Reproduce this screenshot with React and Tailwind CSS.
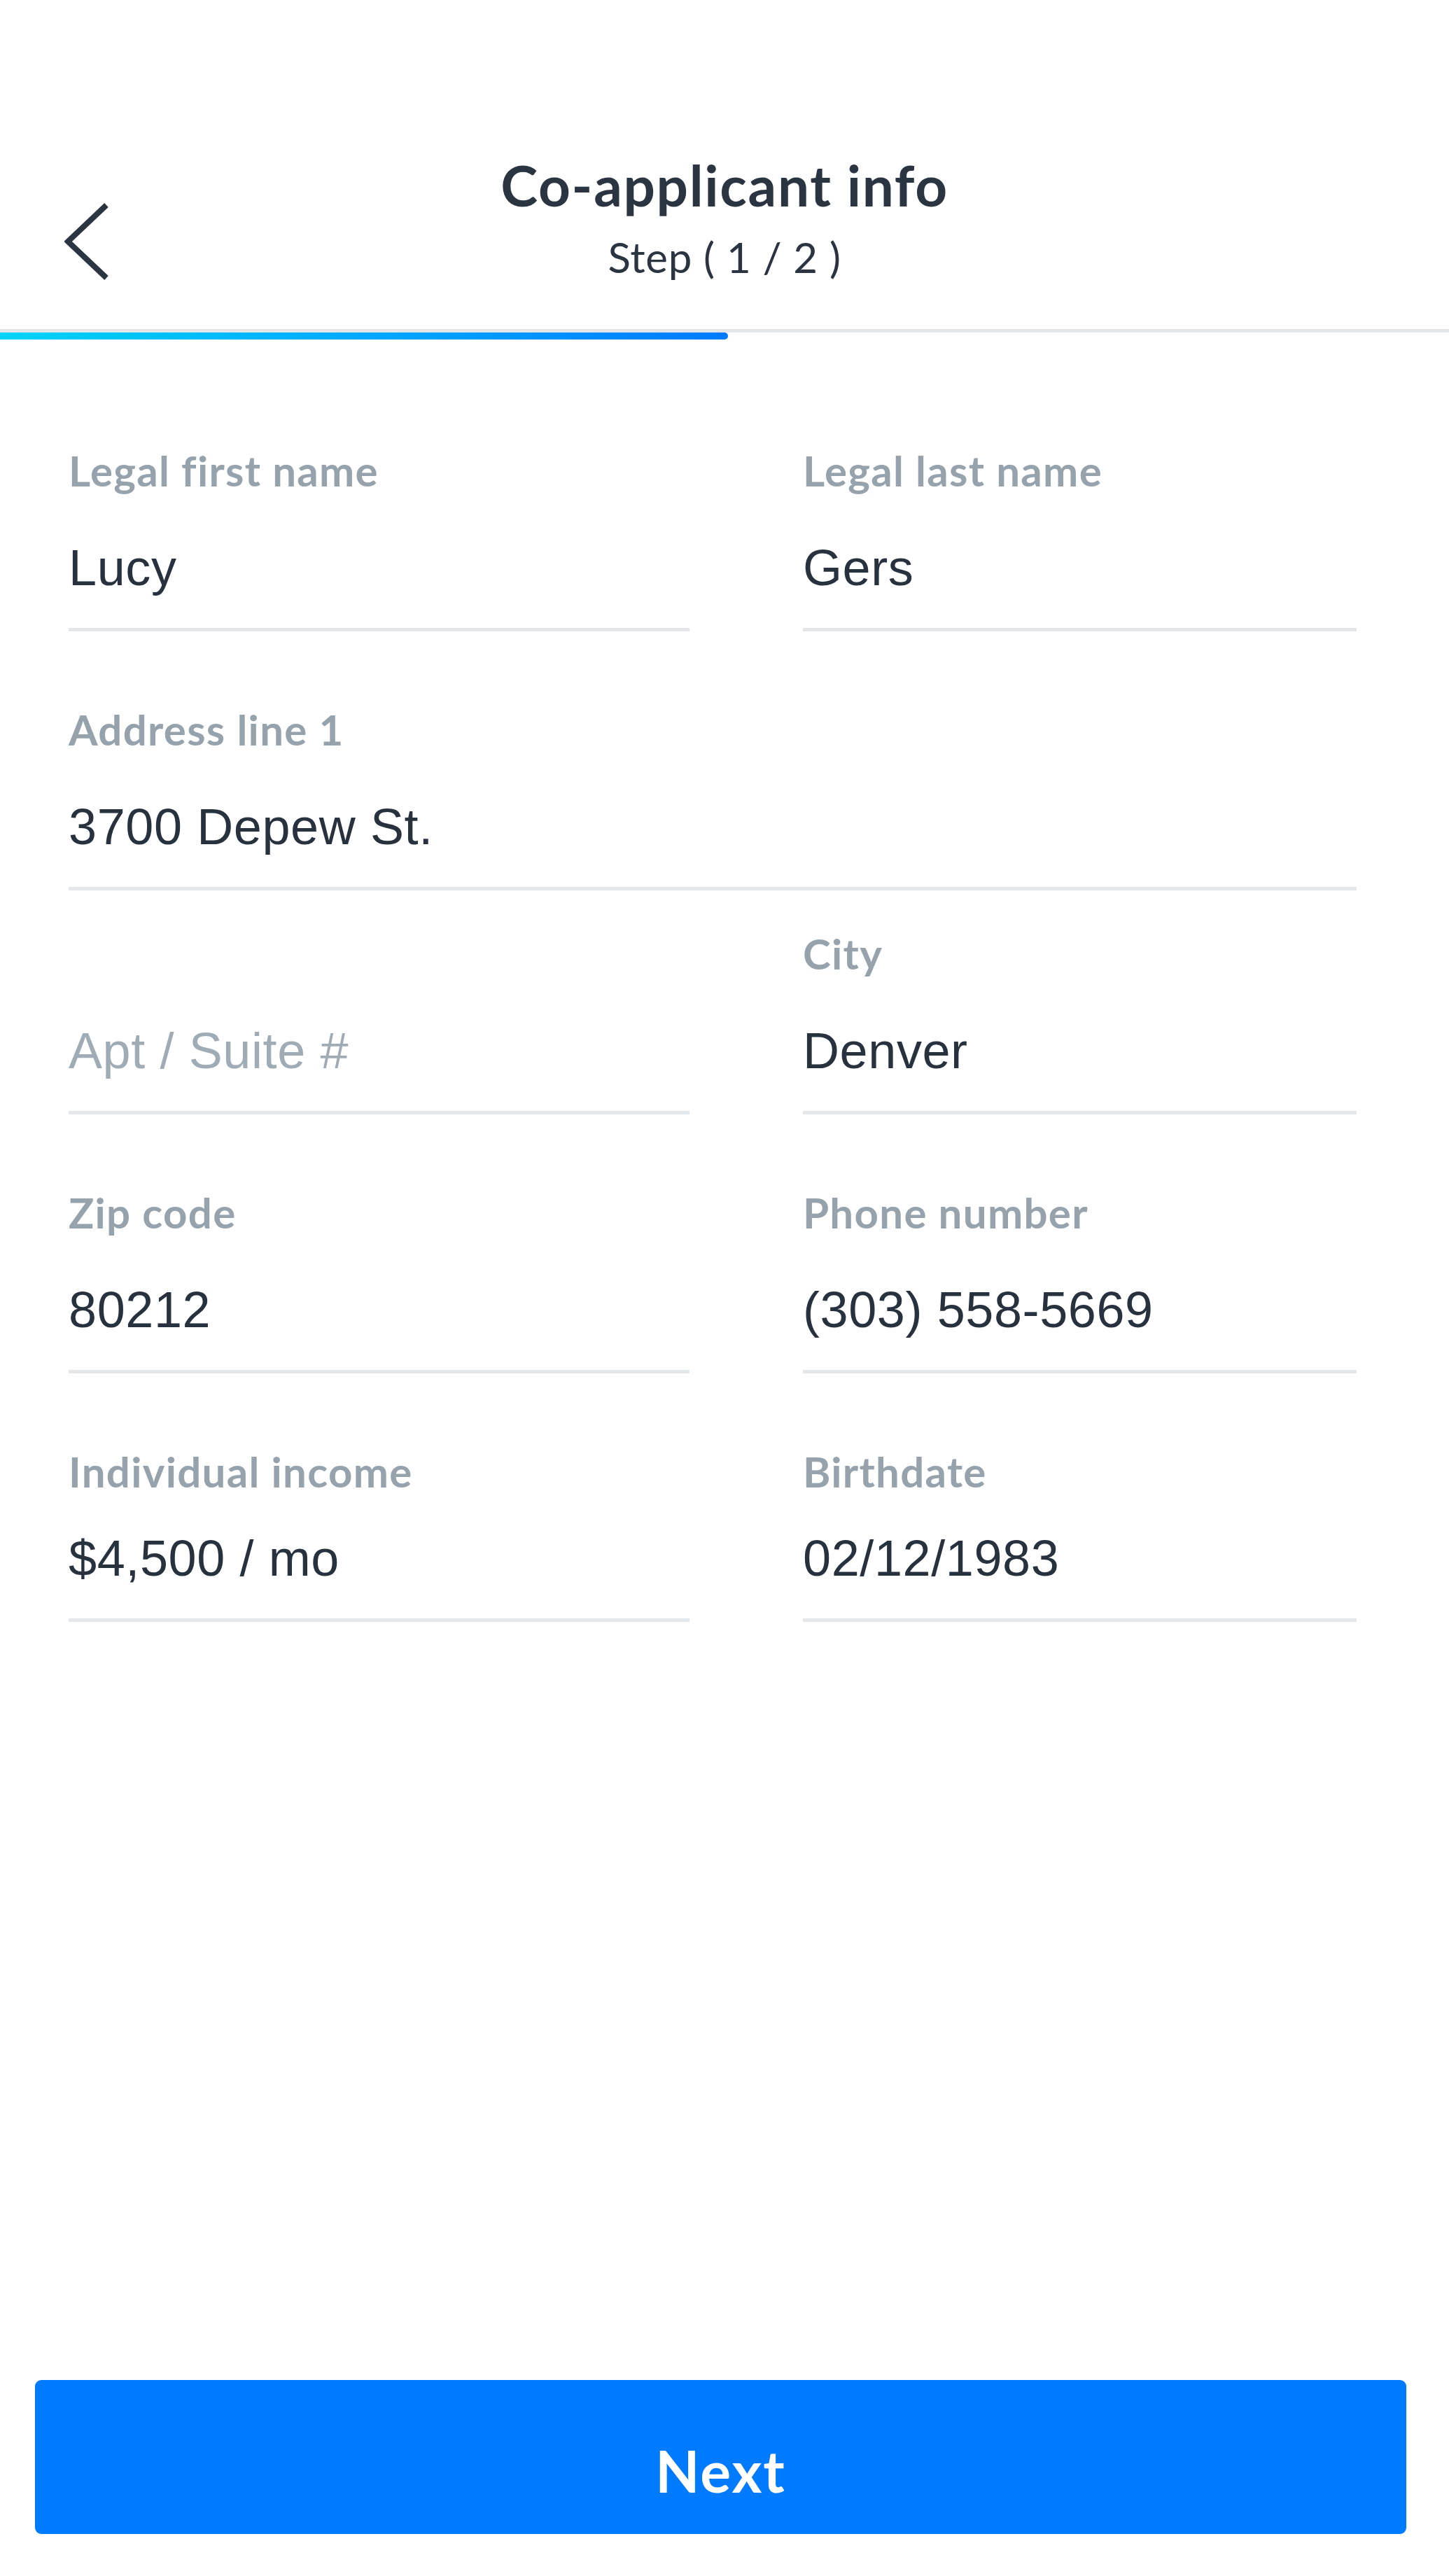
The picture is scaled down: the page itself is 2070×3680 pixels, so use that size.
import React from 'react';

const labelCls = "h-[60px] leading-[60px] text-[60px] font-bold tracking-[1.3px] text-[#96a3ad] font-['Lato',sans-serif] whitespace-nowrap";
const valueCls = "h-[70px] leading-[70px] text-[72px] tracking-[0.6px] font-['Liberation_Sans',Arial,sans-serif] whitespace-nowrap";

const Field = ({ label, value, placeholder, gap = 'mt-[74px]' }) => {
    return (
        <div>
            <div className={labelCls}>{label}</div>
            <div className={`${gap} ${valueCls} ${placeholder ? 'text-[#a0acb5]' : 'text-[#28323e]'}`}>
                {placeholder || value}
            </div>
            <div className="mt-[51px] h-[5px] bg-[#e4e7ea]" />
        </div>
    );
};

const App = () => {
    return (
        <div className="min-h-[3680px] w-full bg-white flex flex-col font-['Lato',sans-serif]">
            {/* header */}
            <header className="h-[475px] border-b-[5px] border-[#e4e7ea] flex items-start pt-[224px]">
                <div className="w-[260px] pl-[92px] pt-[66px]">
                    <svg width="66" height="110" viewBox="0 0 66 110" fill="none">
                        <polyline points="60,3 5,55 60,107" stroke="#2b3542" strokeWidth="8" strokeLinejoin="miter" />
                    </svg>
                </div>
                <div className="flex-1 text-center text-[#2b3542]">
                    <h1 className="h-[80px] leading-[80px] text-[80px] font-bold tracking-[1.7px]">Co-applicant info</h1>
                    <p className="mt-[33px] h-[60px] leading-[60px] text-[60px] tracking-[0.7px]">Step ( 1 / 2 )</p>
                </div>
                <div className="w-[260px]" />
            </header>

            {/* progress */}
            <div className="h-[10px] w-[1040px] rounded-r-full bg-linear-to-r from-[#00d4ff] to-[#007aff]" />

            {/* form */}
            <div className="ml-[98px] w-[1840px] pt-[157px]">
                <div className="grid grid-cols-[887px_791px] gap-x-[162px]">
                    <Field label="Legal first name" value="Lucy" />
                    <Field label="Legal last name" value="Gers" />
                </div>
                <div className="mt-[110px]">
                    <Field label="Address line 1" value="3700 Depew St." />
                </div>
                <div className="mt-[60px] grid grid-cols-[887px_791px] gap-x-[162px]">
                    <Field label="" placeholder="Apt / Suite #" />
                    <Field label="City" value="Denver" />
                </div>
                <div className="mt-[110px] grid grid-cols-[887px_791px] gap-x-[162px]">
                    <Field label="Zip code" value="80212" />
                    <Field label="Phone number" value="(303) 558-5669" />
                </div>
                <div className="mt-[110px] grid grid-cols-[887px_791px] gap-x-[162px]">
                    <Field label="Individual income" value="$4,500 / mo" gap="mt-[59px]" />
                    <Field label="Birthdate" value="02/12/1983" gap="mt-[59px]" />
                </div>
            </div>

            {/* footer */}
            <div className="mt-auto pb-[60px]">
                <button className="ml-[50px] w-[1959px] h-[220px] pt-[38px] rounded-[9px] bg-[#007aff] text-white text-[82px] leading-[182px] font-bold tracking-[2px] font-['Lato',sans-serif]">
                    Next
                </button>
            </div>
        </div>
    );
};

export default App;
